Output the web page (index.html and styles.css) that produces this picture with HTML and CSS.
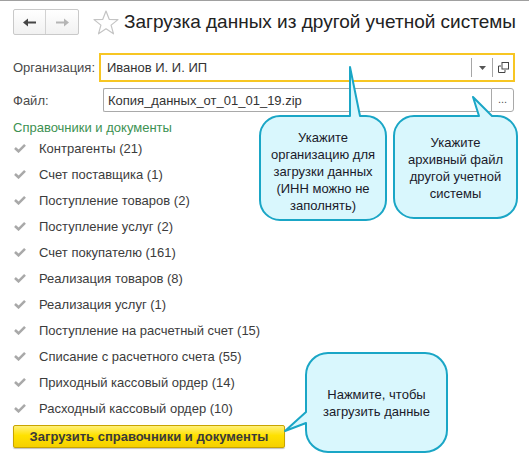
FILE: index.html
```html
<!DOCTYPE html>
<html lang="ru">
<head>
<meta charset="utf-8">
<title>Загрузка данных</title>
<link rel="stylesheet" href="styles.css">
</head>
<body>
<div class="page">
  <div class="header">
    <div class="nav">
      <div class="nav-btn">
        <svg width="13" height="9" viewBox="0 0 13 9"><path d="M0 4.5 L5 0.5 V3.5 H13 V5.5 H5 V8.5 Z" fill="#454545"/></svg>
      </div>
      <div class="nav-btn">
        <svg width="13" height="9" viewBox="0 0 13 9"><path d="M13 4.5 L8 0.5 V3.5 H0 V5.5 H8 V8.5 Z" fill="#b5b5b5"/></svg>
      </div>
    </div>
    <svg class="star" width="26" height="25" viewBox="0 0 26 25"><path d="M13 1 L16.2 9.3 L25 9.6 L18.1 15.1 L20.5 23.8 L13 18.8 L5.5 23.8 L7.9 15.1 L1 9.6 L9.8 9.3 Z" fill="none" stroke="#c4c4c4" stroke-width="1.2" stroke-linejoin="round"/></svg>
    <h1 class="title">Загрузка данных из другой учетной системы</h1>
  </div>

  <div class="form-row row-org">
    <div class="label">Организация:</div>
    <div class="field field-focus">
      <div class="field-text">Иванов И. И. ИП</div>
      <div class="field-btn">
        <svg width="7" height="4" viewBox="0 0 7 4"><path d="M0 0 H7 L3.5 4 Z" fill="#555"/></svg>
      </div>
      <div class="field-btn">
        <svg width="11" height="11" viewBox="0 0 11 11"><rect x="4" y="0.5" width="6.5" height="6.5" fill="none" stroke="#444" stroke-width="1"/><path d="M0.5 4 V10.5 H7 V8" fill="none" stroke="#444" stroke-width="1"/><path d="M0.5 4 H3" fill="none" stroke="#444" stroke-width="1"/></svg>
      </div>
    </div>
  </div>

  <div class="form-row row-file">
    <div class="label">Файл:</div>
    <div class="file-wrap">
      <div class="field field-file">
        <div class="field-text">Копия_данных_от_01_01_19.zip</div>
      </div>
      <div class="dots-btn">...</div>
    </div>
  </div>

  <div class="section-title">Справочники и документы</div>
  <ul class="list">
    <li><span class="check"></span>Контрагенты (21)</li>
    <li><span class="check"></span>Счет поставщика (1)</li>
    <li><span class="check"></span>Поступление товаров (2)</li>
    <li><span class="check"></span>Поступление услуг (2)</li>
    <li><span class="check"></span>Счет покупателю (161)</li>
    <li><span class="check"></span>Реализация товаров (8)</li>
    <li><span class="check"></span>Реализация услуг (1)</li>
    <li><span class="check"></span>Поступление на расчетный счет (15)</li>
    <li><span class="check"></span>Списание с расчетного счета (55)</li>
    <li><span class="check"></span>Приходный кассовый ордер (14)</li>
    <li><span class="check"></span>Расходный кассовый ордер (10)</li>
  </ul>

  <button class="main-btn">Загрузить справочники и документы</button>

  <div class="callout callout-org">
    <svg class="callout-bg" width="128" height="106" viewBox="0 0 128 106"><path d="M21 1 H91 L91 -48 L101 1 H107 A20 20 0 0 1 127 21 V85 A20 20 0 0 1 107 105 H21 A20 20 0 0 1 1 85 V21 A20 20 0 0 1 21 1 Z" fill="#d9f7fd" stroke="#1aa6c6" stroke-width="2" stroke-linejoin="round"/></svg>
    <div class="callout-text">Укажите<br>организацию для<br>загрузки данных<br>(ИНН можно не<br>заполнять)</div>
  </div>

  <div class="callout callout-file">
    <svg class="callout-bg" width="125" height="104" viewBox="0 0 125 104"><path d="M21 1 H86 L80 -18 L99 1 H104 A20 20 0 0 1 124 21 V83 A20 20 0 0 1 104 103 H21 A20 20 0 0 1 1 83 V21 A20 20 0 0 1 21 1 Z" fill="#d9f7fd" stroke="#1aa6c6" stroke-width="2" stroke-linejoin="round"/></svg>
    <div class="callout-text">Укажите<br>архивный файл<br>другой учетной<br>системы</div>
  </div>

  <div class="callout callout-btn">
    <svg class="callout-bg" width="143" height="101" viewBox="0 0 143 101"><path d="M23 1 H120 A22 22 0 0 1 142 23 V78 A22 22 0 0 1 120 100 H23 A22 22 0 0 1 1 78 V71 L-20 79 L1 60 V23 A22 22 0 0 1 23 1 Z" fill="#d9f7fd" stroke="#1aa6c6" stroke-width="2" stroke-linejoin="round"/></svg>
    <div class="callout-text">Нажмите, чтобы<br>загрузить данные</div>
  </div>
</div>
</body>
</html>
```

FILE: styles.css
```css
* { box-sizing: border-box; }

html, body {
  margin: 0;
  padding: 0;
  background: #ffffff;
}

body {
  font-family: "Liberation Sans", Arial, sans-serif;
  font-size: 13px;
  color: #333333;
  width: 529px;
  height: 472px;
  overflow: hidden;
}

.page {
  position: relative;
  height: 472px;
  border-top: 1px solid #a0a0a0;
  padding: 0 13px;
}

.header {
  display: flex;
  align-items: center;
  margin-top: 8px;
  height: 26px;
}

.nav {
  display: flex;
  width: 73px;
  height: 26px;
  border: 1px solid #c9c9c9;
  border-radius: 2px;
  background: linear-gradient(#ffffff, #f1f1f1);
}

.nav-btn {
  flex: 1;
  display: flex;
  align-items: center;
  justify-content: center;
}

.nav-btn + .nav-btn {
  border-left: 1px solid #d2d2d2;
}

.star {
  margin-left: 14px;
  flex: none;
}

.title {
  margin: 0 0 0 5px;
  font-size: 19px;
  font-weight: normal;
  color: #222222;
  white-space: nowrap;
  line-height: 26px;
}

.form-row {
  display: flex;
  align-items: center;
}

.row-org {
  margin-top: 18px;
  height: 29px;
}

.row-file {
  margin-top: 6px;
  height: 24px;
}

.label {
  width: 86px;
  flex: none;
  color: #4a4a4a;
  white-space: nowrap;
}

.field {
  display: flex;
  align-items: stretch;
  background: #fff;
}

.field-focus {
  width: 416px;
  height: 29px;
  border: 2px solid #f7c623;
}

.field-text {
  flex: 1;
  display: flex;
  align-items: center;
  padding-left: 6px;
  color: #333;
  white-space: nowrap;
}

.field-btn {
  width: 21px;
  display: flex;
  align-items: center;
  justify-content: center;
  margin: 3px 0;
  border-left: 1px solid #a6a6a6;
}

.file-wrap {
  display: flex;
  margin-left: 4px;
  height: 24px;
}

.field-file {
  width: 388px;
  border: 1px solid #a9a9a9;
  border-right: none;
  border-radius: 2px 0 0 2px;
}

.field-file .field-text {
  padding-left: 4px;
}

.dots-btn {
  width: 23px;
  border: 1px solid #a9a9a9;
  border-radius: 0 3px 3px 0;
  display: flex;
  align-items: center;
  justify-content: center;
  color: #555;
  font-size: 11px;
  padding-bottom: 3px;
}

.section-title {
  margin-top: 8px;
  line-height: 15px;
  height: 15px;
  color: #3d9152;
}

.list {
  list-style: none;
  margin: 0;
  padding: 0;
}

.list li {
  height: 26px;
  display: flex;
  align-items: center;
  color: #3c3c3c;
  white-space: nowrap;
}

.check {
  width: 12px;
  height: 10px;
  margin: 0 13px 0 1px;
  flex: none;
  background: no-repeat center/12px 10px url("data:image/svg+xml;utf8,<svg xmlns='http://www.w3.org/2000/svg' width='12' height='10' viewBox='0 0 12 10'><path d='M1 5 L4.5 8.3 L11 1.8' fill='none' stroke='%23a9a9a9' stroke-width='2.6'/></svg>");
}

.main-btn {
  display: block;
  margin-top: 4px;
  width: 272px;
  height: 23px;
  border: 1px solid #c8a400;
  border-radius: 2px;
  background: linear-gradient(#fff07a, #ffe100 45%, #f5d000);
  box-shadow: 0 1px 1px rgba(0,0,0,0.25);
  font-family: "Liberation Sans", Arial, sans-serif;
  font-size: 13px;
  font-weight: bold;
  color: #3a3a3a;
  padding: 0;
}

.callout {
  position: absolute;
  display: flex;
  align-items: center;
  justify-content: center;
}

.callout-bg {
  position: absolute;
  left: 0;
  top: 0;
  overflow: visible;
}

.callout-text {
  position: relative;
  text-align: center;
  font-size: 13px;
  line-height: 17px;
  color: #1a1a2a;
}

.callout-org {
  left: 259px;
  top: 114px;
  width: 128px;
  height: 106px;
  padding-top: 6px;
}

.callout-file {
  left: 393px;
  top: 114px;
  width: 125px;
  height: 104px;
  padding-top: 2px;
}

.callout-btn {
  left: 305px;
  top: 351px;
  width: 143px;
  height: 101px;
}
```
